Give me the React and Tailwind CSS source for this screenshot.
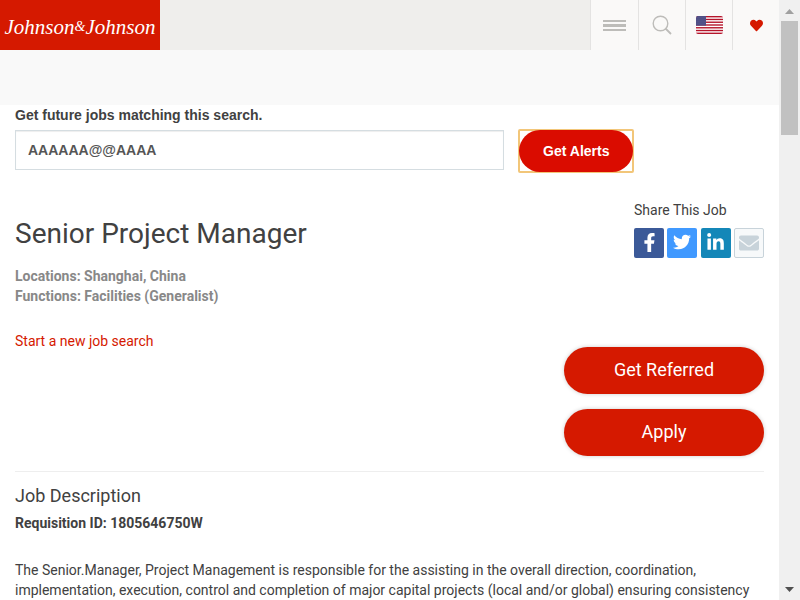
import { FaFacebookF, FaTwitter, FaLinkedinIn, FaEnvelope, FaHeart } from "react-icons/fa";

const cell = "flex h-full w-[47px] items-center justify-center border-l border-[#e4e3e2] bg-[#faf9f8]";
const share = "flex size-[30px] items-center justify-center rounded-xs text-white";
const pill =
  "flex h-[47px] w-[200px] items-center justify-center rounded-full bg-[#d51900] pb-0.5 text-lg text-white shadow-[0_0_4px_rgba(0,0,0,0.2)]";

function Flag() {
  return (
    <svg width="27" height="18" viewBox="0 0 27 18" aria-hidden="true">
      <clipPath id="flag"><rect width="27" height="18" rx="2" /></clipPath>
      <g clipPath="url(#flag)">
        <rect width="27" height="18" fill="#fff" />
        {[0, 1, 2, 3, 4, 5, 6].map((n) => (
          <rect key={n} y={(n * 36) / 13} width="27" height={18 / 13} fill="#b5152b" />
        ))}
        <rect width="10" height="9.7" fill="#46467f" />
        {[1, 3, 5, 7, 9].map((y) =>
          [1, 3, 5, 7, 9].map((x) => <circle key={x + "-" + y} cx={x} cy={y} r="0.4" fill="#a9a9c8" />)
        )}
      </g>
    </svg>
  );
}

function Header() {
  return (
    <header className="flex h-[50px] bg-[#efeeec]">
      <a
        href="#home"
        className="flex w-40 items-center justify-center bg-[#d51900] pt-1 font-['Liberation_Serif',serif] text-[21px] leading-none text-white italic"
      >
        Johnson<span className="text-sm">&amp;</span>Johnson
      </a>
      <nav className="ml-auto flex">
        <button
          aria-label="Menu"
          className="flex h-full w-12 items-center justify-center border-l border-[#e4e3e2] bg-[#faf9f8]"
        >
          <svg width="23" height="12" viewBox="0 0 23 12" fill="#bdbcb9" aria-hidden="true">
            <path d="M0 1h23v2H0zM0 5h23v3H0zM0 10h23v2H0z" />
          </svg>
        </button>
        <button aria-label="Search" className={cell}>
          <svg width="20" height="20" viewBox="0 0 20 20" fill="none" stroke="#bdbcb9" strokeWidth="1.4" aria-hidden="true">
            <circle cx="8.5" cy="8.5" r="7.3" />
            <path d="M13.5 13.5 19 19" strokeWidth="1.8" />
          </svg>
        </button>
        <button aria-label="Country" className={cell}><Flag /></button>
        <button aria-label="Saved jobs" className={cell}>
          <FaHeart size={13} color="#d51900" />
        </button>
      </nav>
    </header>
  );
}

function Scrollbar() {
  return (
    <div aria-hidden="true" className="flex w-[21px] shrink-0 flex-col items-center bg-[#f0f0f0] pt-[9px] pb-2">
      <svg width="9" height="5" viewBox="0 0 9 5" fill="#a0a0a0"><path d="M0 5 4.5 0 9 5z" /></svg>
      <div className="mt-[7px] h-[114px] w-[17px] bg-[#c1c1c1]" />
      <svg className="mt-auto" width="9" height="5" viewBox="0 0 9 5" fill="#505050"><path d="M0 0h9L4.5 5z" /></svg>
    </div>
  );
}

export default function App() {
  return (
    <div className="flex h-screen overflow-hidden bg-white font-[Roboto,sans-serif] text-sm leading-5 text-[#414141]">
      <div className="min-w-0 flex-1 overflow-hidden">
        <Header />
        <div className="h-[55px] bg-[#f9f9f9]" />
        <main className="px-[15px]">
          <form className="font-['Liberation_Sans',sans-serif] font-bold" onSubmit={(e) => e.preventDefault()}>
            <label htmlFor="alert" className="block">Get future jobs matching this search.</label>
            <div className="mt-1 flex items-start gap-[14px]">
              <input
                id="alert"
                defaultValue="AAAAAA@@AAAA"
                className="mt-px h-10 w-[65.3%] border border-[#d5dde1] px-3 text-[#555] shadow-[inset_0_1px_1px_rgba(0,0,0,0.07)] outline-none"
              />
              <div className="rounded-xs border-2 border-[#f2c679]">
                <button className="-m-px block h-[42px] rounded-full bg-[#da0c00] px-6 text-white">Get Alerts</button>
              </div>
            </div>
          </form>

          <div className="flex justify-between border-b border-[#eeeeee] pb-[15px]">
            <section className="pt-[43px]">
              <h1 className="text-[28px] leading-9">Senior Project Manager</h1>
              <div className="mt-[14px] font-bold text-[#888]">
                <p>Locations: Shanghai, China</p>
                <p>Functions: Facilities (Generalist)</p>
              </div>
              <a href="#search" className="mt-[25px] block text-[#d51900]">Start a new job search</a>
            </section>
            <aside className="flex flex-col items-end pt-[27px]">
              <div className="w-[130px]">
                <h2>Share This Job</h2>
                <div className="mt-2 flex justify-between">
                  <a href="#facebook" aria-label="Facebook" className={share + " bg-[#3b5998] pb-0.5"}><FaFacebookF size={19} /></a>
                  <a href="#twitter" aria-label="Twitter" className={share + " bg-[#4099ff] pb-0.5"}><FaTwitter size={18} /></a>
                  <a href="#linkedin" aria-label="LinkedIn" className={share + " bg-[#1487b8] pb-0.5"}><FaLinkedinIn size={19} /></a>
                  <a href="#email" aria-label="Email" className={share + " border border-[#c8d3da] bg-[#f7f9fa]"}><FaEnvelope size={20} color="#c8d3da" /></a>
                </div>
              </div>
              <div className="mt-[89px] flex flex-col gap-[15px]">
                <button className={pill}>Get Referred</button>
                <button className={pill}>Apply</button>
              </div>
            </aside>
          </div>

          <section className="pt-[14px]">
            <h2 className="text-lg leading-5">Job Description</h2>
            <p className="mt-[7px] font-bold">Requisition ID: 1805646750W</p>
            <p className="mt-[27px]">
              The Senior.Manager, Project Management is responsible for the assisting in the overall direction,
              coordination, implementation, execution, control and completion of major capital projects (local and/or
              global) ensuring consistency
            </p>
          </section>
        </main>
      </div>
      <Scrollbar />
    </div>
  );
}
